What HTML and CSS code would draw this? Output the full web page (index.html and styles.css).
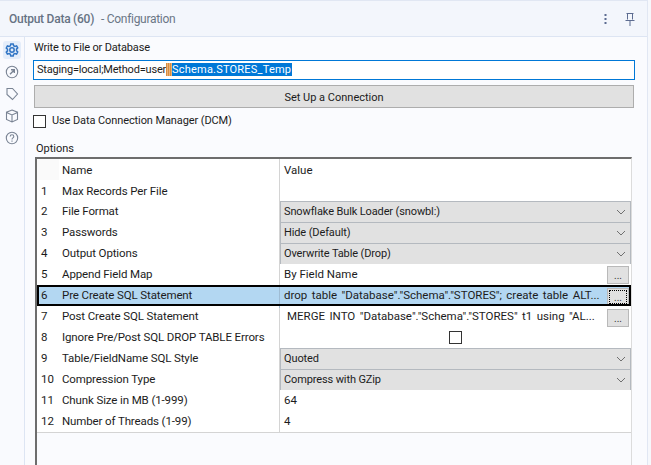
FILE: index.html
```html
<!DOCTYPE html>
<html lang="en">
<head>
<meta charset="utf-8">
<title>Output Data (60) - Configuration</title>
<link rel="stylesheet" href="styles.css">
</head>
<body>
<div class="app">
  <header class="head">
    <div class="title"><b>Output Data (60)</b><span class="sub">- Configuration</span></div>
    <div class="head-icons">
      <svg class="kebab" width="4" height="12" viewBox="0 0 4 12"><rect x="0.5" y="1" width="2" height="2"/><rect x="0.5" y="5" width="2" height="2"/><rect x="0.5" y="9" width="2" height="2"/></svg>
      <svg class="pin" width="12" height="14" viewBox="0 0 12 14" fill="none"><path d="M2.5 1.5h7M3.5 1.5v6M8.5 1.5v6M1.500 8.500h9M6 8.500V14"/></svg>
    </div>
  </header>
  <div class="body">
    <nav class="side">
      <div class="tab active">
        <svg width="14" height="14" viewBox="0 0 14 14" fill="none"><path d="M5.800 1h2.400l.4 1.700 1.300.7 1.700-.5 1.100 2-1.200 1.200v1.700l1.200 1.200-1.100 2-1.700-.5-1.300.7L8.200 13H5.800l-.4-1.700-1.300-.7-1.700.5-1.100-2L2.500 7.900V6.200L1.300 5l1.100-2 1.700.5 1.300-.7z"/><circle cx="7" cy="7" r="2.200"/></svg>
      </div>
      <div class="tab">
        <svg width="14" height="14" viewBox="0 0 14 14" fill="none"><circle cx="7" cy="7" r="5.700"/><path d="M5 9.300l4-4M6 4.800h3.300v3.300" stroke-width="1.400"/></svg>
      </div>
      <div class="tab">
        <svg width="14" height="14" viewBox="0 0 14 14" fill="none"><path d="M2 1.500h5.500l5 5.500-5 5.500L2 7.500z"/></svg>
      </div>
      <div class="tab">
        <svg width="14" height="14" viewBox="0 0 14 14" fill="none"><path d="M7 1l5.500 2.200v7.300L7 13l-5.500-2.500V3.200zM1.500 3.500L7 6l5.500-2.500M7 6v7"/></svg>
      </div>
      <div class="tab">
        <svg width="14" height="14" viewBox="0 0 14 14" fill="none"><circle cx="7" cy="7" r="5.700"/><path d="M5.200 5.500c0-2.300 3.600-2.300 3.600 0 0 1.400-1.800 1.400-1.800 2.900"/><path d="M7 9.500v1.300"/></svg>
      </div>
    </nav>
    <main class="main">
      <div class="field-label">Write to File or Database</div>
      <div class="path-input"><span class="conn">Staging=local;Method=user</span><span class="redact"></span><span class="sel">Schema.STORES_Temp</span></div>
      <button class="connect" type="button">Set Up a Connection</button>
      <label class="dcm"><span class="check"></span><span>Use Data Connection Manager (DCM)</span></label>
      <div class="options-label">Options</div>
      <div class="grid">
        <div class="row head-row"><div class="num"></div><div class="name">Name</div><div class="val">Value</div></div>
        <div class="row first"><div class="num">1</div><div class="name">Max Records Per File</div><div class="val"></div></div>
        <div class="row"><div class="num">2</div><div class="name">File Format</div><div class="val combo"><span>Snowflake Bulk Loader (snowbl:)</span><svg class="chev" width="10" height="6" viewBox="0 0 10 6" fill="none"><path d="M1 1l4 4 4-4"/></svg></div></div>
        <div class="row"><div class="num">3</div><div class="name">Passwords</div><div class="val combo"><span>Hide (Default)</span><svg class="chev" width="10" height="6" viewBox="0 0 10 6" fill="none"><path d="M1 1l4 4 4-4"/></svg></div></div>
        <div class="row"><div class="num">4</div><div class="name">Output Options</div><div class="val combo"><span>Overwrite Table (Drop)</span><svg class="chev" width="10" height="6" viewBox="0 0 10 6" fill="none"><path d="M1 1l4 4 4-4"/></svg></div></div>
        <div class="row"><div class="num">5</div><div class="name">Append Field Map</div><div class="val btn-cell"><span class="ellip">By Field Name</span><span class="more">...</span></div></div>
        <div class="row selected"><div class="num">6</div><div class="name">Pre Create SQL Statement</div><div class="val btn-cell"><span class="ellip raised">drop table "Database"."Schema"."STORES"; create table ALT...</span><span class="more focus">...</span></div></div>
        <div class="row"><div class="num">7</div><div class="name">Post Create SQL Statement</div><div class="val btn-cell"><span class="ellip raised merge">MERGE INTO "Database"."Schema"."STORES" t1 using "AL...</span><span class="more">...</span></div></div>
        <div class="row"><div class="num">8</div><div class="name">Ignore Pre/Post SQL DROP TABLE Errors</div><div class="val center"><span class="check small"></span></div></div>
        <div class="row"><div class="num">9</div><div class="name">Table/FieldName SQL Style</div><div class="val combo"><span>Quoted</span><svg class="chev" width="10" height="6" viewBox="0 0 10 6" fill="none"><path d="M1 1l4 4 4-4"/></svg></div></div>
        <div class="row"><div class="num">10</div><div class="name">Compression Type</div><div class="val combo"><span>Compress with GZip</span><svg class="chev" width="10" height="6" viewBox="0 0 10 6" fill="none"><path d="M1 1l4 4 4-4"/></svg></div></div>
        <div class="row"><div class="num">11</div><div class="name">Chunk Size in MB (1-999)</div><div class="val">64</div></div>
        <div class="row"><div class="num">12</div><div class="name">Number of Threads (1-99)</div><div class="val">4</div></div>
      </div>
    </main>
  </div>
</div>
</body>
</html>
```
FILE: styles.css
```css
* { box-sizing: border-box; }
html, body { margin: 0; height: 465px; overflow: hidden; background: #f6f8fc; }
body { font: 11px/16px "Roboto", "Liberation Sans", sans-serif; color: #1c1c1c; }
.app { width: 648px; height: 465px; border-top: 1px solid #e1e7f3; border-right: 1px solid #e1e7f3; display: flex; flex-direction: column; background: #fafbfe; }
.head { height: 36px; flex: none; background: #f3f6fc; border-bottom: 1px solid #dde5f3; display: flex; align-items: center; justify-content: space-between; padding: 0 11px 0 9px; }
.title { color: #6b7686; font-size: 12px; display: flex; gap: 7px; }
.title b { font-weight: 500; color: #667283; letter-spacing: -.25px; }
.sub { font-weight: 400; letter-spacing: -.3px; }
.head-icons { display: flex; align-items: center; gap: 16px; }
.kebab { fill: #5d6c91; }
.pin { stroke: #5d6c91; stroke-width: 1; }
.body { flex: 1; display: flex; min-height: 0; }
.side { width: 25px; flex: none; border-right: 1px solid #dde5f3; background: #f9fafe; padding: 4px 3px 0; display: flex; flex-direction: column; gap: 4px; }
.tab { width: 18px; height: 18px; border-radius: 3px; display: flex; align-items: center; justify-content: center; }
.tab svg { stroke: #7a8494; stroke-width: 1.100; }
.tab.active { background: #e4edfa; }
.tab.active svg { stroke: #2f74c4; stroke-width: 1.500; }
.main { flex: 1; min-width: 0; padding: 3px 0 0 8px; position: relative; }
.field-label { height: 16px; margin-left: 1px; letter-spacing: -.16px; }
.path-input { margin-top: 4px; width: 602px; height: 20px; border: 1px solid #0078d7; background: #fff; padding-left: 3px; line-height: 18px; white-space: nowrap; display: flex; }
.conn { letter-spacing: -.19px; }
.redact { width: 6px; height: 13px; margin-top: 2px; background: repeating-linear-gradient(90deg, #d98c3e 0 1px, #e9b27a 1px 2px); }
.sel { background: #0078d7; color: #fff; height: 13px; line-height: 13px; margin-top: 2px; padding-right: 1px; letter-spacing: .2px; }
.connect { display: block; margin: 5px 0 0 1px; width: 600px; height: 23px; background: #e1e1e1; border: 1px solid #adadad; font: inherit; color: #1c1c1c; padding: 2px 0 0; }
.dcm { display: flex; align-items: center; gap: 6px; margin: 6px 0 0 0; height: 14px; letter-spacing: -.1px; }
.check { display: block; width: 13px; height: 13px; border: 1px solid #333; background: #fff; }
.options-label { margin: 13px 0 0 3px; height: 16px; line-height: 16px; }
.grid { margin: 0 0 0 2px; width: 597px; height: 320px; background: #fafbfe; border-top: 2px solid #6d6d6d; border-left: 2px solid #6d6d6d; border-right: 1px solid #dcdcdc; font-size: 11.500px; }
.row { display: grid; grid-template-columns: 22px 221px 1fr; height: 21px; background: #fff; position: relative; }
.row > div { border-bottom: 1px solid #d4d4d4; line-height: 21px; white-space: nowrap; }
.num { padding-left: 4px; }
.name { padding-left: 3px; border-right: 1px solid #d4d4d4; letter-spacing: -.12px; }
.val { padding-left: 4px; }
.head-row > div, .first > div { padding-top: 1px; }
.head-row > div, .first .num, .first .name { border-bottom-color: transparent; }
.head-row .num { background: #fafafa; border-bottom: 0; }
.row > .combo { background: #e1e1e1; border: 1px solid #b4b9bf; padding: 0 4px 0 3px; display: flex; align-items: center; justify-content: space-between; line-height: 16px; font-size: 11px; letter-spacing: -.12px; }
.chev { stroke: #707070; stroke-width: 1; }
.row > .btn-cell { display: flex; align-items: center; justify-content: space-between; padding-right: 2px; }
.ellip { display: block; }
.raised { margin-bottom: 2px; word-spacing: 1.600px; }
.merge { padding-left: 3px; }
.more { width: 22px; height: 18px; background: #e1e1e1; border: 1px solid #b9b9b9; display: block; text-align: center; line-height: 18px; font-size: 10px; color: #333; }
.more.focus { border: 1px solid #b9b9b9; outline: 1px dotted #000; outline-offset: -3px; }
.selected { background: #b3d7f2; outline: 2px solid #000; outline-offset: -2px; z-index: 1; }
.row.selected > div { border-bottom: 0; }
.selected .name { border-right-color: #9fbcd4; }
.row > .center { display: flex; align-items: center; justify-content: center; padding: 0 1px 0 0; }
.check.small { width: 13px; height: 13px; }
```
